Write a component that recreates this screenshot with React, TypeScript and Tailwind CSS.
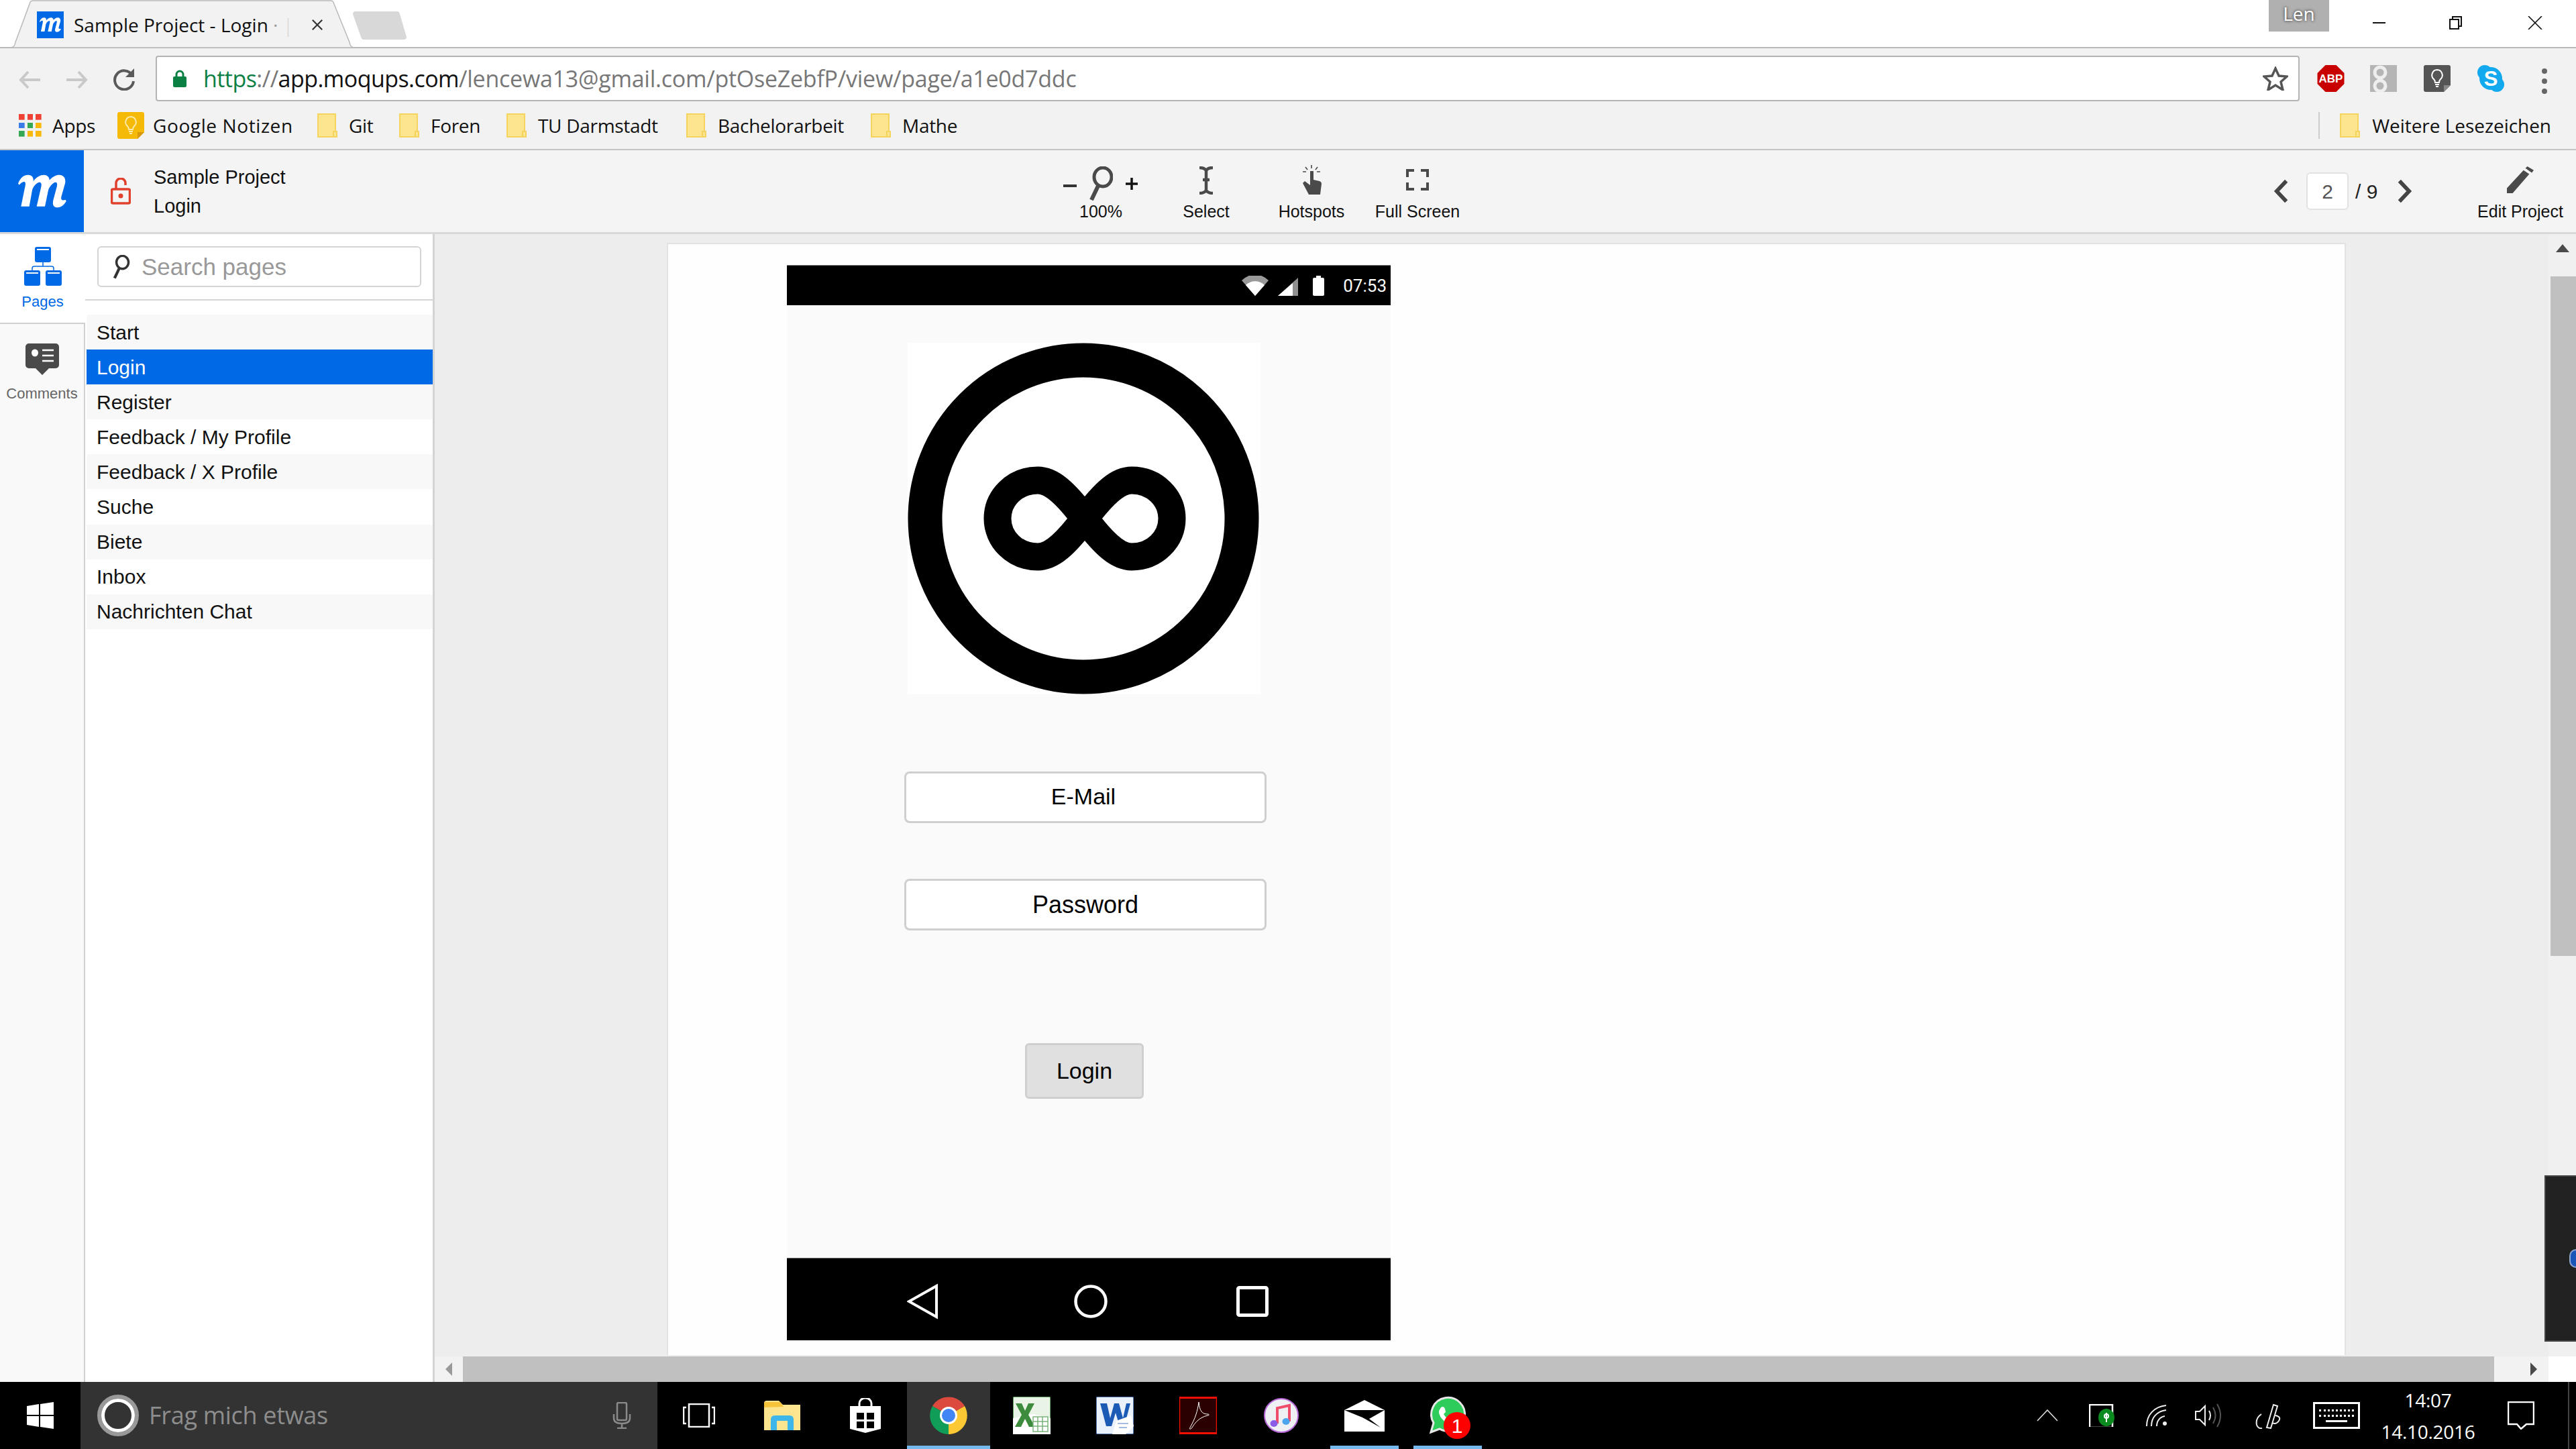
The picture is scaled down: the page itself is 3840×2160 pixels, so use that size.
const SEGOE = 'font-["Open_Sans",sans-serif]'
const ARIAL = 'font-["Liberation_Sans",Arial,sans-serif]'

const pages = ['Start', 'Login', 'Register', 'Feedback / My Profile', 'Feedback / X Profile', 'Suche', 'Biete', 'Inbox', 'Nachrichten Chat']
const stripedPages = ['Start', 'Register', 'Feedback / X Profile', 'Biete', 'Nachrichten Chat']

function MoqupsMark({ className }: { className: string }) {
  return (
    <svg viewBox="75 125 216 149" className={className}>
      <path
        d="M75 165C85 140 100 127 120 127C138 127 145 140 143 155C158 135 175 127 190 127C205 127 215 137 215 150C230 135 245 127 258 127C280 127 290 145 285 165L268 225C265 238 272 243 288 238L290 245C275 268 262 272 248 272C232 272 228 258 232 240L248 180C252 165 248 158 240 160C228 165 215 180 210 195L195 268L158 268L178 180C182 165 176 158 168 160C155 165 142 180 138 195L125 268L88 268L107 175C110 160 105 155 98 158C90 160 85 165 80 172Z"
        fill="#fff"
      />
    </svg>
  )
}

function Folder({ className = '' }: { className?: string }) {
  return (
    <svg viewBox="0 0 30 36" className={`h-[36px] w-[30px] shrink-0 ${className}`}>
      <path d="M1 1h26v34H1z" fill="#fde58f" stroke="#f4d35e" strokeWidth="2" />
      <path d="M24 35v-8h5v8z" fill="#fde58f" stroke="#f4d35e" strokeWidth="2" />
    </svg>
  )
}

function AppsGrid() {
  const colors = ['#ef4135', '#ef4135', '#ef4135', '#3b7de8', '#34a853', '#f9b90c', '#34a853', '#f9b90c', '#f9b90c']
  return (
    <div className="grid h-[34px] w-[34px] shrink-0 grid-cols-3 gap-[4px]">
      {colors.map((c, i) => (
        <svg key={i} viewBox="0 0 8 8" className="h-full w-full">
          <rect width="8" height="8" fill={c} />
        </svg>
      ))}
    </div>
  )
}

function KeepIcon({ dark = false }: { dark?: boolean }) {
  return (
    <svg viewBox="0 0 40 40" className="h-[40px] w-[40px] shrink-0">
      <path d="M3 0h34a3 3 0 0 1 3 3v27L30 40H3a3 3 0 0 1-3-3V3a3 3 0 0 1 3-3z" fill={dark ? '#555' : '#f5b908'} />
      <path d="M30 40V30h10z" fill={dark ? '#888' : '#d9980a'} />
      <path d="M20 7a8 8 0 0 0-5 14c1 1 2 3 2 5h6c0-2 1-4 2-5a8 8 0 0 0-5-14zM17 29h6M18 32h4" fill="none" stroke={dark ? '#fff' : '#fde9a8'} strokeWidth="2" />
    </svg>
  )
}

function Tab() {
  return (
    <div className="relative ml-[14px] flex h-[72px] w-[516px] items-start pl-[41px] pt-[17px]">
      <svg viewBox="0 0 516 72" className="absolute left-0 top-0 h-[72px] w-[516px]" preserveAspectRatio="none">
        <path d="M0 71c6 0 8-2 9-8L30 6q1-5 5-5h444q4 0 5 5l23 57c1 6 3 8 9 8z" fill="#f2f2f2" stroke="#b9b9b9" strokeWidth="1.5" />
      </svg>
      <div className="relative flex h-[40px] w-[40px] shrink-0 items-center justify-center bg-[#0069e6]">
        <MoqupsMark className="h-[22px] w-[32px]" />
      </div>
      <span className={`relative ml-[15px] w-[354px] shrink-0 text-[28px] leading-[40px] whitespace-nowrap text-[#111] ${SEGOE}`}>
        Sample Project - Login <span className="text-[#999]">·</span> <span className="text-[#ddd]">|</span>
      </span>
      <svg viewBox="0 0 20 20" className="relative mt-[10px] h-[20px] w-[18px] shrink-0">
        <path d="M2 2l16 16M18 2L2 18" stroke="#333" strokeWidth="2.4" />
      </svg>
    </div>
  )
}

function TabStrip() {
  return (
    <div className="relative flex h-[72px] items-start border-b-[2px] border-[#b9b9b9] bg-white">
      <Tab />
      <svg viewBox="0 0 84 42" className="ml-[-4px] mt-[17px] h-[42px] w-[84px] shrink-0">
        <path d="M4 0h62q3 0 4 4l10 34q0 4-4 4H16q-3 0-4-4L0 4q0-4 4-4z" fill="#d8d8d8" />
      </svg>
      <div className="ml-auto flex items-start">
        <div className="flex h-[47px] w-[90px] items-start justify-center bg-[#b0b0b0] pt-[6px]">
          <span className={`text-[28px] leading-none text-white [text-shadow:0_0_4px_#222] ${SEGOE}`}>Len</span>
        </div>
        <div className="ml-[65px] mt-[33px] h-[2px] w-[19px] bg-[#111]" />
        <svg viewBox="0 0 20 20" className="ml-[95px] mt-[24px] h-[20px] w-[20px]">
          <path d="M1 5h13v14H1zM5 5V1h13v14h-4" fill="none" stroke="#111" strokeWidth="2" />
        </svg>
        <svg viewBox="0 0 22 20" className="ml-[97px] mr-[50px] mt-[24px] h-[20px] w-[22px]">
          <path d="M1 0l20 20M21 0L1 20" stroke="#111" strokeWidth="1.6" />
        </svg>
      </div>
    </div>
  )
}

function AddressRow() {
  return (
    <div className="flex h-[80px] items-start bg-[#f2f2f2] pt-[11px]">
      <svg viewBox="0 0 32 28" className="ml-[28px] mt-[22px] h-[28px] w-[32px]">
        <path d="M14 2L3 14l11 12M3 14h29" fill="none" stroke="#c9c9c9" strokeWidth="4" />
      </svg>
      <svg viewBox="0 0 32 28" className="ml-[39px] mt-[22px] h-[28px] w-[32px]">
        <path d="M18 2l11 12-11 12M29 14H0" fill="none" stroke="#c9c9c9" strokeWidth="4" />
      </svg>
      <svg viewBox="0 0 34 34" className="ml-[37px] mt-[18px] h-[34px] w-[34px]">
        <path d="M29 11A14 14 0 1 0 31 20" fill="none" stroke="#5a5a5a" strokeWidth="4" />
        <path d="M32 1v13H19z" fill="#5a5a5a" />
      </svg>
      <div className="ml-[30px] flex h-[68px] w-[3196px] items-center rounded-[4px] border-[2px] border-[#b4b4b4] bg-white pl-[24px]">
        <svg viewBox="0 0 20 26" className="h-[26px] w-[20px] shrink-0">
          <path d="M5 11V7a5 5 0 0 1 10 0v4" fill="none" stroke="#0b8043" strokeWidth="3" />
          <rect x="0" y="10" width="20" height="16" rx="2" fill="#0b8043" />
        </svg>
        <div className={`ml-[25px] text-[34px] leading-none tracking-[-0.55px] whitespace-nowrap text-[#777] ${SEGOE}`}>
          <span className="text-[#0b8043]">https</span>
          <span>://</span>
          <span className="text-[#111]">app.moqups.com</span>
          <span className="tracking-[-0.25px]">/lencewa13@gmail.com/ptOseZebfP/view/page/a1e0d7ddc</span>
        </div>
        <svg viewBox="0 0 38 36" className="ml-auto mr-[15px] h-[36px] w-[38px]">
          <path d="M19 3l5 11 12 1-9 8 3 12-11-7-11 7 3-12-9-8 12-1z" fill="none" stroke="#555" strokeWidth="3.5" />
        </svg>
      </div>
      <svg viewBox="0 0 40 40" className="ml-[26px] mt-[14px] h-[40px] w-[41px] shrink-0">
        <path d="M12 0h16l12 12v16L28 40H12L0 28V12z" fill="#c80000" />
        <text x="20" y="26" textAnchor="middle" fontSize="17" fontWeight="700" fill="#fff" fontFamily="Liberation Sans">ABP</text>
      </svg>
      <svg viewBox="0 0 40 40" className="ml-[38px] mt-[14px] h-[40px] w-[40px] shrink-0">
        <rect width="40" height="40" fill="#b5b5b5" />
        <circle cx="15" cy="11" r="8" fill="none" stroke="#eee" strokeWidth="5" />
        <circle cx="15" cy="31" r="8" fill="none" stroke="#eee" strokeWidth="5" />
      </svg>
      <div className="ml-[40px] mt-[14px]"><KeepIcon dark /></div>
      <svg viewBox="0 0 40 40" className="ml-[40px] mt-[14px] h-[40px] w-[40px] shrink-0">
        <circle cx="11" cy="11" r="11" fill="#12a9ee" />
        <circle cx="29" cy="29" r="11" fill="#12a9ee" />
        <circle cx="20" cy="20" r="17" fill="#12a9ee" />
        <text x="20" y="31" textAnchor="middle" fontSize="31" fontWeight="700" fill="#fff" fontFamily="Liberation Sans">S</text>
      </svg>
      <div className="ml-[56px] mt-[19px] flex flex-col gap-[7px]">
        <div className="h-[8px] w-[8px] rounded-full bg-[#666]" />
        <div className="h-[8px] w-[8px] rounded-full bg-[#666]" />
        <div className="h-[8px] w-[8px] rounded-full bg-[#666]" />
      </div>
    </div>
  )
}

function Bookmark({ label, width }: { label: string; width: number }) {
  return (
    <div className="flex items-center" style={{ width }}>
      <Folder />
      <span className={`ml-[17px] text-[28px] leading-none tracking-[-0.3px] whitespace-nowrap text-[#111] ${SEGOE}`}>{label}</span>
    </div>
  )
}

function BookmarksBar() {
  return (
    <div className="flex h-[72px] items-center border-b-[2px] border-[#c4c4c4] bg-[#f2f2f2] pl-[28px]">
      <AppsGrid />
      <span className={`ml-[16px] w-[97px] text-[28px] leading-none tracking-[-0.3px] text-[#111] ${SEGOE}`}>Apps</span>
      <KeepIcon />
      <span className={`ml-[13px] w-[245px] text-[28px] leading-none tracking-[0.6px] whitespace-nowrap text-[#111] ${SEGOE}`}>Google Notizen</span>
      <Bookmark label="Git" width={122} />
      <Bookmark label="Foren" width={160} />
      <Bookmark label="TU Darmstadt" width={268} />
      <Bookmark label="Bachelorarbeit" width={275} />
      <Bookmark label="Mathe" width={158} />
      <div className="ml-auto flex items-center pr-[37px]">
        <div className="mr-[30px] h-[40px] w-[2px] bg-[#ccc]" />
        <Folder />
        <span className={`ml-[18px] text-[28px] leading-none tracking-[-0.04px] whitespace-nowrap text-[#111] ${SEGOE}`}>Weitere Lesezeichen</span>
      </div>
    </div>
  )
}

function ToolLabel({ children }: { children: string }) {
  return <span className={`text-[25px] leading-none whitespace-nowrap text-[#111] ${ARIAL}`}>{children}</span>
}

function Magnifier({ className, color = '#4a4a4a' }: { className: string; color?: string }) {
  return (
    <svg viewBox="0 0 36 52" className={className}>
      <ellipse cx="21" cy="16" rx="13" ry="14" fill="none" stroke={color} strokeWidth="5" />
      <path d="M14 29L4 50" stroke={color} strokeWidth="6" />
    </svg>
  )
}

function AppHeader() {
  return (
    <div className={`flex h-[125px] items-center border-b-[3px] border-[#d9d9d9] bg-[#f4f4f4] ${ARIAL}`}>
      <div className="flex h-full w-[125px] shrink-0 items-center justify-center bg-[#0069e6]">
        <MoqupsMark className="h-[50px] w-[72px]" />
      </div>
      <svg viewBox="0 0 30 40" className="ml-[40px] h-[40px] w-[30px] shrink-0">
        <path d="M8 17V8a7 7 0 0 1 14 0v3" fill="none" stroke="#e0402c" strokeWidth="3.5" />
        <rect x="1.5" y="17" width="27" height="21" rx="2" fill="none" stroke="#e0402c" strokeWidth="3.5" />
        <circle cx="15" cy="27" r="3.5" fill="#e0402c" />
      </svg>
      <div className="ml-[34px] mt-[2px] flex w-[200px] shrink-0 flex-col gap-[14px] text-[29px] leading-[29px] text-[#111]">
        <span>Sample Project</span>
        <span>Login</span>
      </div>
      <div className="ml-[1156px] flex w-[112px] shrink-0 flex-col items-center self-start pt-[24px]">
        <div className="flex h-[52px] w-full items-center justify-between text-[#111]">
          <div className="mt-[6px] h-[4px] w-[20px] bg-[#333]" />
          <Magnifier className="h-[52px] w-[36px]" />
          <svg viewBox="0 0 20 20" className="h-[20px] w-[20px]">
            <path d="M10 1v18M1 10h18" stroke="#111" strokeWidth="3.5" />
          </svg>
        </div>
        <div className="mt-[3px]"><ToolLabel>100%</ToolLabel></div>
      </div>
      <div className="ml-[51px] flex w-[100px] shrink-0 flex-col items-center self-start pt-[24px]">
        <svg viewBox="0 0 24 42" className="h-[42px] w-[24px]">
          <path d="M2 2q7 0 10 4 3-4 10-4M2 40q7 0 10-4 3 4 10 4M12 4v34M7 20h10" fill="none" stroke="#4a4a4a" strokeWidth="4.5" />
        </svg>
        <div className="mt-[13px]"><ToolLabel>Select</ToolLabel></div>
      </div>
      <div className="ml-[42px] flex w-[130px] shrink-0 flex-col items-center self-start pt-[22px]">
        <svg viewBox="0 0 34 44" className="h-[44px] w-[34px]">
          <path d="M15 9h5v13l9 2q3 1 3 4l-2 16H13L4 27l3-3 8 6z" fill="#4a4a4a" />
          <path d="M17 0v5M8 3l3 4M26 3l-3 4M4 10h5M30 10h-5" stroke="#4a4a4a" strokeWidth="1.6" />
        </svg>
        <div className="mt-[13px]"><ToolLabel>Hotspots</ToolLabel></div>
      </div>
      <div className="ml-[23px] flex w-[140px] shrink-0 flex-col items-center self-start pt-[28px]">
        <svg viewBox="0 0 34 32" className="h-[32px] w-[34px]">
          <path d="M2 12V2h10M22 2h10v10M2 20v10h10M32 20v10H22" fill="none" stroke="#4a4a4a" strokeWidth="4" />
        </svg>
        <div className="mt-[19px]"><ToolLabel>Full Screen</ToolLabel></div>
      </div>
      <svg viewBox="0 0 24 38" className="ml-[1206px] h-[38px] w-[23px] shrink-0">
        <path d="M20 3L5 19l15 16" fill="none" stroke="#444" strokeWidth="6" />
      </svg>
      <div className="ml-[26px] flex h-[56px] w-[63px] shrink-0 items-center justify-center rounded-[6px] border-[2px] border-[#e2e2e2] bg-white text-[30px] text-[#555]">2</div>
      <span className="ml-[10px] w-[37px] shrink-0 text-[30px] whitespace-nowrap text-[#222]">/ 9</span>
      <svg viewBox="0 0 24 38" className="ml-[25px] h-[38px] w-[23px] shrink-0">
        <path d="M4 3l15 16L4 35" fill="none" stroke="#444" strokeWidth="6" />
      </svg>
      <div className="ml-[96px] flex w-[130px] shrink-0 flex-col items-center self-start pt-[24px]">
        <svg viewBox="0 0 42 42" className="h-[40px] w-[42px]">
          <path d="M0 42v-8L26 6l9 6L9 42zM29 3l3-3 10 6-3 4z" fill="#4a4a4a" />
        </svg>
        <div className="mt-[15px]"><ToolLabel>Edit Project</ToolLabel></div>
      </div>
    </div>
  )
}

function Rail() {
  return (
    <div className={`flex w-[127px] shrink-0 flex-col ${ARIAL}`}>
      <div className="flex h-[134px] flex-col items-center border-b-[2px] border-[#d0d0d0] bg-white pt-[19px]">
        <svg viewBox="0 0 56 58" className="h-[58px] w-[56px]">
          <rect x="16" y="0" width="24" height="23" rx="3" fill="#0069e6" />
          <rect x="0" y="35" width="24" height="23" rx="3" fill="#0069e6" />
          <rect x="32" y="35" width="24" height="23" rx="3" fill="#0069e6" />
          <path d="M19 4h18M3 39h18M35 39h18" stroke="#fff" strokeWidth="2" />
          <path d="M12 35v-3q0-3 3-3h26q3 0 3 3v3M28 23v6" fill="none" stroke="#0069e6" strokeWidth="1.5" />
        </svg>
        <span className="mt-[13px] text-[22px] leading-none text-[#0069e6]">Pages</span>
      </div>
      <div className="flex flex-1 flex-col items-center border-r-[2px] border-[#d0d0d0] bg-[#f9f9f9] pt-[29px]">
        <svg viewBox="0 0 50 48" className="h-[48px] w-[50px]">
          <path d="M5 0h40a5 5 0 0 1 5 5v27a5 5 0 0 1-5 5H35L25 47 15 37H5a5 5 0 0 1-5-5V5a5 5 0 0 1 5-5z" fill="#4a4a4a" />
          <ellipse cx="14" cy="14" rx="5" ry="5.5" fill="#fff" />
          <path d="M25 10h17M25 18h17M25 26h17" stroke="#fff" strokeWidth="2.5" />
        </svg>
        <span className="mt-[16px] text-[22px] leading-none text-[#666]">Comments</span>
      </div>
    </div>
  )
}

function PagesPanel() {
  return (
    <div className={`flex w-[521px] shrink-0 flex-col border-r-[3px] border-[#d4d4d4] bg-white ${ARIAL}`}>
      <div className="flex h-[99px] shrink-0 items-start border-b-[2px] border-[#d4d4d4] pl-[18px] pt-[18px]">
        <div className="flex h-[61px] w-[483px] items-center rounded-[6px] border-[2px] border-[#d4d4d4] pl-[20px]">
          <Magnifier className="h-[36px] w-[27px]" color="#333" />
          <span className="ml-[17px] text-[35px] leading-none text-[#999]">Search pages</span>
        </div>
      </div>
      <ul className="mt-[21px] flex flex-col pl-[2px]">
        {pages.map((page) => (
          <li
            key={page}
            className={`flex h-[52.1px] items-center pl-[15px] text-[30px] ${
              page === 'Login' ? 'bg-[#0069e6] text-white' : stripedPages.includes(page) ? 'bg-[#f8f8f8] text-[#111]' : 'bg-white text-[#111]'
            }`}
          >
            {page}
          </li>
        ))}
      </ul>
    </div>
  )
}

function InfinityLogo() {
  return (
    <svg viewBox="0 0 526 524" className="h-[524px] w-[526px]">
      <circle cx="262" cy="262" r="236" fill="none" stroke="#000" strokeWidth="51" />
      <path
        d="M264 262C294 222 314 205 334 205C369 205 394 232 394 262C394 292 369 319 334 319C314 319 294 302 264 262C234 222 214 205 194 205C159 205 134 232 134 262C134 292 159 319 194 319C214 319 234 302 264 262Z"
        fill="none"
        stroke="#000"
        strokeWidth="41"
      />
    </svg>
  )
}

function PhoneField({ children, className }: { children: string; className: string }) {
  return (
    <div className={`flex h-[77px] w-[540px] items-center justify-center rounded-[8px] border-[3px] border-[#cfcfcf] bg-white text-black ${className}`}>
      {children}
    </div>
  )
}

function Phone() {
  return (
    <div className={`ml-[177px] mt-[31px] flex h-[1603px] w-[900px] flex-col ${ARIAL}`}>
      <div className="flex h-[60px] shrink-0 items-center justify-end border-t-[1px] border-[#777] bg-black pr-[6px]">
        <svg viewBox="0 0 40 30" className="h-[30px] w-[40px]">
          <path d="M0 7a28 28 0 0 1 40 0L20 30z" fill="#999" />
          <path d="M6 14a20 20 0 0 1 28 0L20 30z" fill="#fff" />
        </svg>
        <svg viewBox="0 0 30 27" className="ml-[14px] mt-[3px] h-[27px] w-[30px]">
          <path d="M30 0v27H0z" fill="#8f8f8f" />
          <path d="M22 8v19H0z" fill="#fff" />
        </svg>
        <svg viewBox="0 0 17 30" className="ml-[22px] h-[30px] w-[17px]">
          <path d="M5 0h7v3h3q2 0 2 2v23q0 2-2 2H2q-2 0-2-2V5q0-2 2-2h3z" fill="#fff" />
        </svg>
        <span className="ml-[28px] font-['Roboto',sans-serif] text-[26px] leading-none text-white">07:53</span>
      </div>
      <div className="flex flex-1 flex-col bg-[#fafafa] pl-[175px]">
        <div className="ml-[5px] mt-[56px] h-[524px] w-[526px] bg-white">
          <InfinityLogo />
        </div>
        <PhoneField className="mt-[115px] pb-[3px] pr-[6px] text-[34px]">E-Mail</PhoneField>
        <PhoneField className="mt-[83px] text-[36px]">Password</PhoneField>
        <div className="ml-[180px] mt-[168px] flex h-[83px] w-[177px] items-center justify-center rounded-[6px] border-[3px] border-[#cfcfcf] bg-[#e0e0e0] text-[34px] text-black">
          Login
        </div>
      </div>
      <div className="flex h-[123px] shrink-0 items-center border-t-[1px] border-[#666] bg-black pt-[6px]">
        <svg viewBox="0 0 46 54" className="ml-[179px] h-[54px] w-[46px]">
          <path d="M44 4v46L3 27z" fill="none" stroke="#fff" strokeWidth="4" />
        </svg>
        <svg viewBox="0 0 50 50" className="ml-[203px] h-[50px] w-[50px]">
          <circle cx="25" cy="25" r="22.5" fill="none" stroke="#fff" strokeWidth="4.5" />
        </svg>
        <svg viewBox="0 0 48 46" className="ml-[192px] h-[46px] w-[48px]">
          <rect x="2.5" y="2.5" width="43" height="41" rx="2" fill="none" stroke="#fff" strokeWidth="5" />
        </svg>
      </div>
    </div>
  )
}

function Workspace() {
  return (
    <div className="relative flex min-w-0 flex-1 flex-col">
      <div className="flex min-h-0 flex-1">
        <div className="flex-1 bg-[#ededed] pb-[2px] pl-[346px] pt-[13px]">
          <div className="h-full w-[2503px] border-x-[2px] border-t-[2px] border-[#e2e2e2] bg-[#fefefe]">
            <Phone />
          </div>
        </div>
        <div className="flex w-[41px] shrink-0 flex-col items-end bg-[#f0f0f0] pt-[15px]">
          <svg viewBox="0 0 20 12" className="mr-[10px] h-[12px] w-[20px]">
            <path d="M10 0l10 12H0z" fill="#4a4a4a" />
          </svg>
          <div className="mt-[36px] h-[1013px] w-[38px] bg-[#c0c0c0]" />
        </div>
      </div>
      <div className="flex h-[38px] shrink-0 items-center">
        <div className="flex h-full w-[3151px] items-center bg-[#f2f2f2]">
          <svg viewBox="0 0 10 20" className="ml-[16px] h-[20px] w-[10px]">
            <path d="M10 0v20L0 10z" fill="#999" />
          </svg>
          <div className="ml-[16px] h-full w-[3028px] bg-[#c0c0c0]" />
          <svg viewBox="0 0 10 20" className="ml-[54px] h-[20px] w-[10px]">
            <path d="M0 0v20l10-10z" fill="#4a4a4a" />
          </svg>
        </div>
      </div>
      <div className="absolute right-0 top-[1403px] flex h-[248px] w-[47px] items-center justify-end border-[2px] border-r-0 border-[#444] bg-[#222]">
        <div className="h-[28px] w-[10px] rounded-l-full border-[2px] border-r-0 border-[#8fa8d0] bg-[#1a56b8]" />
      </div>
    </div>
  )
}

function TaskCell({ children, active = false, running = false }: { children: React.ReactNode; active?: boolean; running?: boolean }) {
  return (
    <div className={`relative flex h-full w-[124px] shrink-0 items-center justify-center ${active ? 'bg-[#333]' : ''}`}>
      {children}
      {(active || running) && <div className={`absolute bottom-0 h-[5px] bg-[#76b9ed] ${active ? 'inset-x-0' : 'inset-x-[11px]'}`} />}
    </div>
  )
}

function Taskbar() {
  return (
    <div className={`relative flex h-[100px] shrink-0 items-center bg-black ${SEGOE}`}>
      <div className="flex h-full w-[120px] shrink-0 items-center justify-center">
        <svg viewBox="0 0 40 40" className="h-[40px] w-[40px]">
          <path d="M0 6l18-3v16H0zM20 3l20-3v19H20zM0 21h18v16L0 34zM20 21h20v19l-20-3z" fill="#fff" />
        </svg>
      </div>
      <div className="flex h-full w-[860px] shrink-0 items-center bg-[#333] pl-[25px]">
        <div className="h-[62px] w-[62px] shrink-0 rounded-full border-[6px] border-[#999] p-0">
          <div className="h-full w-full rounded-full border-[5px] border-white" />
        </div>
        <span className="ml-[15px] text-[36px] leading-none tracking-[-0.3px] text-[#8d8d8d]">Frag mich etwas</span>
        <svg viewBox="0 0 28 40" className="ml-auto mr-[39px] h-[40px] w-[28px]">
          <rect x="7" y="1" width="14" height="26" rx="2" fill="none" stroke="#8a8a8a" strokeWidth="2.5" />
          <path d="M2 18v6q0 8 12 8t12-8v-6M14 32v6M7 39h14" fill="none" stroke="#8a8a8a" strokeWidth="2.5" />
        </svg>
      </div>
      <TaskCell>
        <svg viewBox="0 0 48 36" className="h-[36px] w-[48px]">
          <path d="M9 1h30v34H9zM5 6H1v24h4M43 6h4v24h-4" fill="none" stroke="#fff" strokeWidth="2.5" />
        </svg>
      </TaskCell>
      <TaskCell>
        <svg viewBox="0 0 54 44" className="h-[44px] w-[54px]">
          <path d="M0 4q0-4 4-4h18l6 6h26v38H0z" fill="#fde58f" />
          <path d="M0 2h24l5 7-29 1z" fill="#f6c33a" />
          <path d="M10 44V28q0-6 6-6h22q6 0 6 6v16h-9V30H19v14z" fill="#3fb6ea" />
        </svg>
      </TaskCell>
      <TaskCell>
        <svg viewBox="0 0 46 52" className="h-[52px] w-[46px]">
          <path d="M0 12h46v34L23 52 0 46z" fill="#fff" />
          <path d="M14 12V8a9 8 0 0 1 18 0v4" fill="none" stroke="#fff" strokeWidth="3" />
          <path d="M10 22h11v10H10zM25 22h11v10H25zM10 35h11v10H10zM25 35h11v10H25z" fill="#000" />
        </svg>
      </TaskCell>
      <TaskCell active>
        <svg viewBox="0 0 56 56" className="h-[56px] w-[56px]">
          <path d="M28 28L4 14A28 28 0 0 1 52 14z" fill="#db4a3d" />
          <path d="M28 28L52 14A28 28 0 0 1 28 56z" fill="#fcc934" />
          <path d="M28 28L28 56A28 28 0 0 1 4 14z" fill="#0f9d58" />
          <circle cx="28" cy="28" r="13" fill="#fff" />
          <circle cx="28" cy="28" r="10" fill="#4285f4" />
        </svg>
      </TaskCell>
      <TaskCell>
        <svg viewBox="0 0 56 56" className="h-[56px] w-[56px]">
          <rect width="56" height="56" rx="2" fill="#e9f3e6" stroke="#3d8b3d" strokeWidth="1.5" />
          <path d="M0 32L30 26l26 6v24H0z" fill="#fff" />
          <path d="M4 10h9l5 11 5-11h9L23 27l10 18h-9l-6-12-6 12H3l10-18z" fill="#3d8b3d" />
          <path d="M30 30h22v22H30zM30 37h22M30 44h22M37 30v22M44 30v22" fill="#fff" stroke="#7bb27b" strokeWidth="1.5" />
        </svg>
      </TaskCell>
      <TaskCell>
        <svg viewBox="0 0 56 56" className="h-[56px] w-[56px]">
          <rect width="56" height="56" rx="2" fill="#eaf1fb" stroke="#2a5699" strokeWidth="1.5" />
          <path d="M6 10h10l5 22 6-22h7l6 22 5-22h6l-9 34h-7l-6-20-6 20h-8z" fill="#1b5ab5" />
          <path d="M30 36l22-8 4 16-12 12H24z" fill="#fff" />
          <path d="M32 40h16M34 46h12" stroke="#a4bce4" strokeWidth="2" />
        </svg>
      </TaskCell>
      <TaskCell>
        <svg viewBox="0 0 56 56" className="h-[56px] w-[56px]">
          <rect width="56" height="56" fill="#2a0000" />
          <path d="M0 1.5h56M0 54.5h56" stroke="#f40f02" strokeWidth="3" />
          <path d="M0.5 0v56M55.5 0v56" stroke="#f40f02" strokeWidth="1.5" />
          <path d="M29 8c-2 14-5 24-13 38c-2 3 1 3 3 0c5-8 11-15 23-18c3 0 3-2 0-2c-8 0-12-5-13-18z" fill="none" stroke="#fff" strokeWidth="1" />
        </svg>
      </TaskCell>
      <TaskCell>
        <svg viewBox="0 0 52 52" className="h-[52px] w-[52px]">
          <circle cx="26" cy="26" r="25" fill="#eef0f4" stroke="#b86bd8" strokeWidth="2" />
          <path d="M20 38V15l18-4v24" fill="none" stroke="#ee4d6b" strokeWidth="4" />
          <ellipse cx="15" cy="38" rx="5.5" ry="5" fill="#8b5ce8" />
          <ellipse cx="33" cy="35" rx="5.5" ry="5" fill="#4ba6ef" />
        </svg>
      </TaskCell>
      <TaskCell running>
        <svg viewBox="0 0 60 47" className="h-[47px] w-[60px]">
          <path d="M30 0L60 15H0z" fill="#fff" />
          <path d="M0 15h60v32H0z" fill="#fff" />
          <path d="M0 15H60L37 28 54 41 27 26z" fill="#000" />
        </svg>
      </TaskCell>
      <TaskCell running>
        <svg viewBox="0 0 54 54" className="h-[54px] w-[54px] overflow-visible">
          <path d="M2 52l4-14a25 25 0 1 1 9 9z" fill="#2ecc5a" stroke="#e6e6e6" strokeWidth="3" />
          <path d="M17 15q4-3 6 2l1 5-3 3q4 7 10 9l3-3 5 2q2 5-3 7c-10 2-23-10-22-20z" fill="#fff" />
          <ellipse cx="41" cy="42" rx="20" ry="20" fill="#f00" />
          <text x="41" y="53" textAnchor="middle" fontSize="30" fill="#fff" fontFamily="Liberation Sans">1</text>
        </svg>
      </TaskCell>
      <div className="ml-auto flex h-full items-center pr-[62px]">
        <svg viewBox="0 0 32 18" className="h-[18px] w-[32px]">
          <path d="M1 17L16 1l15 16" fill="none" stroke="#ddd" strokeWidth="1.6" />
        </svg>
        <svg viewBox="0 0 40 34" className="ml-[46px] h-[34px] w-[40px]">
          <path d="M1 1h34v34H1z" fill="none" stroke="#fff" strokeWidth="2.5" />
          <ellipse cx="26" cy="20" rx="12" ry="13" fill="#0b8a1f" />
          <path d="M26 13v14M23 18a3 3 0 0 1 6 0 3 3 0 0 1-6 0z" fill="none" stroke="#fff" strokeWidth="2" />
        </svg>
        <svg viewBox="0 0 32 32" className="ml-[45px] h-[32px] w-[32px]">
          <path d="M1 32C1 15 12 3 30 1M8 32C8 19 16 10 30 8M16 32C16 24 21 18 28 17" fill="none" stroke="#eee" strokeWidth="2" />
          <circle cx="28" cy="28" r="3" fill="#eee" />
        </svg>
        <svg viewBox="0 0 40 36" className="ml-[41px] h-[36px] w-[40px]">
          <path d="M1 12h6l8-8v28l-8-8H1zM21 11q4 7 0 14" fill="none" stroke="#eee" strokeWidth="2" />
          <path d="M27 6q7 12 0 24M33 1q10 17 0 34" fill="none" stroke="#555" strokeWidth="2" />
        </svg>
        <svg viewBox="0 0 42 40" className="ml-[49px] h-[40px] w-[42px]">
          <path d="M18 38L28 4l6 2-10 33zM10 18Q1 24 3 34q2 6 8 5M31 20q9 2 5 8t-10 3" fill="none" stroke="#eee" strokeWidth="2" />
        </svg>
        <div className="ml-[45px] flex h-[40px] w-[70px] flex-col justify-center gap-[5px] border-[3px] border-white px-[6px]">
          <div className="h-[3px] border-t-[3px] border-dotted border-white" />
          <div className="h-[3px] border-t-[3px] border-dotted border-white" />
          <div className="mx-[10px] h-[3px] bg-white" />
        </div>
        <div className="ml-[27px] flex w-[149px] flex-col items-center gap-[15px] text-[28px] leading-[32px] tracking-[-0.3px] text-white">
          <span>14:07</span>
          <span>14.10.2016</span>
        </div>
        <svg viewBox="0 0 40 42" className="ml-[44px] h-[42px] w-[40px]">
          <path d="M1 1h38v33H28l-8 7-6-7H1z" fill="none" stroke="#fff" strokeWidth="2.5" />
        </svg>
      </div>
      <div className="absolute right-[10px] top-0 h-full w-[2px] bg-[#444]" />
    </div>
  )
}

export default function App() {
  return (
    <div className="flex h-[2160px] w-[3840px] flex-col overflow-hidden bg-white">
      <TabStrip />
      <AddressRow />
      <BookmarksBar />
      <AppHeader />
      <div className="flex min-h-0 flex-1">
        <Rail />
        <PagesPanel />
        <Workspace />
      </div>
      <Taskbar />
    </div>
  )
}
